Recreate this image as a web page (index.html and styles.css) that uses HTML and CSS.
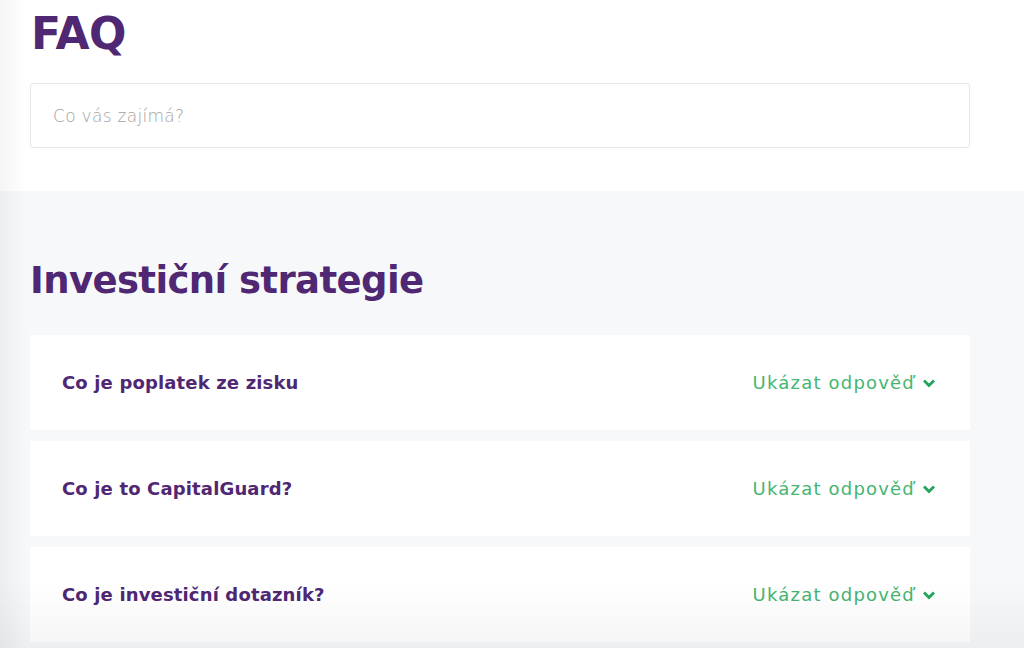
FILE: index.html
```html
<!DOCTYPE html>
<html lang="cs">
<head>
  <meta charset="UTF-8">
  <title>FAQ</title>
  <link rel="stylesheet" href="styles.css">
</head>
<body>

  <section class="top">
    <h1>FAQ</h1>
    <input class="search" type="text" placeholder="Co vás zajímá?">
  </section>

  <section class="group">
    <h2>Investiční strategie</h2>

    <div class="faq-item">
      <div class="question">Co je poplatek ze zisku</div>
      <div class="toggle">Ukázat odpověď
        <svg width="14" height="10" viewBox="0 0 14 10"><path d="M2 2.5l5 5 5-5" fill="none" stroke="#21a55b" stroke-width="2.8"/></svg>
      </div>
    </div>

    <div class="faq-item">
      <div class="question">Co je to CapitalGuard?</div>
      <div class="toggle">Ukázat odpověď
        <svg width="14" height="10" viewBox="0 0 14 10"><path d="M2 2.5l5 5 5-5" fill="none" stroke="#21a55b" stroke-width="2.8"/></svg>
      </div>
    </div>

    <div class="faq-item">
      <div class="question">Co je investiční dotazník?</div>
      <div class="toggle">Ukázat odpověď
        <svg width="14" height="10" viewBox="0 0 14 10"><path d="M2 2.5l5 5 5-5" fill="none" stroke="#21a55b" stroke-width="2.8"/></svg>
      </div>
    </div>
  </section>

  <div class="shade"></div>

</body>
</html>
```

FILE: styles.css
```css
body {
  margin: 0;
  background-color: #f7f8fa;
  font-family: "DejaVu Sans", sans-serif;
  color: #4f2773;
}

.top {
  background-color: #fff;
  padding: 1px 55px 43px 30px;
}

h1 {
  margin: 0 0 16px 1px;
  font-size: 44px;
  font-weight: 600;
  line-height: 66px;
  letter-spacing: -0.5px;
}

.search {
  display: block;
  box-sizing: border-box;
  width: 940px;
  height: 65px;
  padding: 0 22px;
  border: 1px solid #e6e6e6;
  border-radius: 3px;
  font-family: inherit;
  font-size: 17px;
  font-weight: 300;
  letter-spacing: 0.3px;
  color: #333;
  outline: none;
}

.search::placeholder {
  color: #a3a3a3;
}

.group {
  padding: 65px 55px 20px 30px;
}

h2 {
  margin: 0 0 29px 0;
  font-size: 37px;
  font-weight: 700;
  line-height: 50px;
  letter-spacing: -0.6px;
}

.faq-item {
  display: flex;
  justify-content: space-between;
  align-items: center;
  width: 940px;
  box-sizing: border-box;
  height: 95px;
  margin-bottom: 11px;
  padding: 0 34px 0 32px;
  background-color: #fff;
}

.question {
  font-size: 18px;
  font-weight: 700;
  letter-spacing: 0.15px;
}

.toggle {
  display: flex;
  align-items: center;
  gap: 7px;
  font-size: 18px;
  font-weight: 400;
  letter-spacing: 1.2px;
  color: #45b571;
}

.shade {
  position: fixed;
  inset: 0;
  pointer-events: none;
  background:
    linear-gradient(to right, rgba(0, 0, 0, 0.04), rgba(0, 0, 0, 0) 26px),
    linear-gradient(to bottom, rgba(0, 0, 0, 0) 580px, rgba(0, 0, 0, 0.04));
}
```
